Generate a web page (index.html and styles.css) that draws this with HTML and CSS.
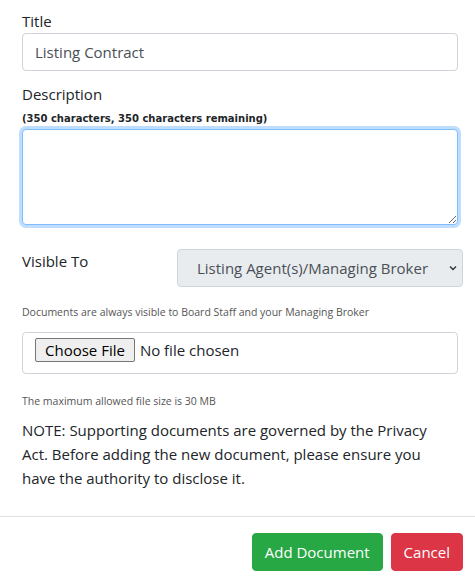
FILE: index.html
```html
<!DOCTYPE html>
<html lang="en">
<head>
    <meta charset="UTF-8">
    <meta name="viewport" content="width=device-width, initial-scale=1.0">
    <title>Add Document</title>
    <link rel="stylesheet" href="styles.css">
</head>
<body>
    <!-- Form body -->
    <div class="modal-body">
        <form class="doc-form">
            <div class="form-group">
                <label for="title" class="field-label">Title</label>
                <input type="text" id="title" class="form-control" value="Listing Contract">
            </div>

            <div class="form-group">
                <label for="desc" class="field-label desc-label">Description</label>
                <span class="char-count">(350 characters, 350 characters remaining)</span>
                <textarea id="desc" class="form-control text-area is-focused" rows="3"></textarea>
            </div>

            <div class="form-row">
                <label for="visible" class="row-label">Visible To</label>
                <div class="select-wrap">
                    <select id="visible" class="form-control select-box">
                        <option>Listing Agent(s)/Managing Broker</option>
                    </select>
                    <svg class="select-arrow" width="8" height="6" viewBox="0 0 8 6">
                        <polyline points="1,1.5 4,4.5 7,1.5" fill="none" stroke="#333" stroke-width="1.4"/>
                    </svg>
                </div>
            </div>

            <p class="hint hint-visible">Documents are always visible to Board Staff and your Managing Broker</p>

            <div class="file-box">
                <input type="file" class="file-input">
            </div>

            <p class="hint hint-size">The maximum allowed file size is 30 MB</p>

            <p class="note">NOTE: Supporting documents are governed by the Privacy Act. Before adding the new document, please ensure you have the authority to disclose it.</p>
        </form>
    </div>

    <!-- Footer buttons -->
    <div class="modal-footer">
        <button type="button" class="btn btn-success">Add Document</button>
        <button type="button" class="btn btn-danger">Cancel</button>
    </div>
</body>
</html>
```

FILE: styles.css
```css
body {
    margin: 0;
    font-family: 'Open Sans', sans-serif;
    font-size: 15px;
    line-height: 24px;
    color: #212529;
    background: #ffffff;
}
.modal-body {
    padding: 9px 17px 26px 22px;
}
.form-group {
    margin: 0;
}
.field-label {
    display: block;
    height: 24px;
}
.desc-label {
    margin-top: 11px;
}
.form-control {
    display: block;
    box-sizing: border-box;
    width: 100%;
    height: 38px;
    padding: 6px 12px;
    font-family: inherit;
    font-size: 15px;
    line-height: 24px;
    color: #495057;
    background-color: #ffffff;
    border: 1px solid #ced4da;
    border-radius: 4px;
    outline: none;
}
.char-count {
    display: block;
    margin: 6px 0 3px;
    font-family: 'DejaVu Sans', Verdana, sans-serif;
    font-size: 10px;
    font-weight: bold;
    line-height: 14px;
    color: #212529;
}
.text-area {
    height: 96px;
    resize: vertical;
}
.is-focused {
    border-color: #80bdff;
    box-shadow: 0 0 0 3px rgba(0, 123, 255, 0.25);
}
.form-row {
    display: flex;
    margin-top: 24px;
    margin-right: -5px;
}
.row-label {
    width: 155px;
    flex-shrink: 0;
}
.select-wrap {
    position: relative;
    flex: 1;
}
.select-box {
    appearance: none;
    -webkit-appearance: none;
    padding-left: 19px;
    background-color: #e9ecef;
    color: #495057;
}
.select-arrow {
    position: absolute;
    right: 6px;
    top: 16px;
    pointer-events: none;
}
.hint {
    margin: 16px 0 0;
    font-size: 10.5px;
    line-height: 18px;
    color: #555555;
}
.hint-size {
    margin-top: 18px;
}
.file-box {
    box-sizing: border-box;
    height: 42px;
    margin-top: 11px;
    padding: 5px 12px;
    border: 1px solid #ced4da;
    border-radius: 4px;
}
.file-input {
    font-family: inherit;
    font-size: 15px;
    color: #212529;
}
.file-input::file-selector-button {
    font-family: inherit;
    font-size: 15px;
    padding: 1px 9px;
    margin-right: 5px;
    color: #000000;
    background-color: #efefef;
    border: 1px solid #767676;
    border-radius: 2px;
}
.note {
    max-width: 416px;
    margin: 8px 0 0;
}
.modal-footer {
    display: flex;
    justify-content: flex-end;
    padding: 12px 8px;
    border-top: 1px solid #dee2e6;
}
.btn {
    margin: 4px;
    height: 38px;
    padding: 6px 12px;
    font-family: inherit;
    font-size: 15px;
    line-height: 24px;
    color: #ffffff;
    border: 1px solid transparent;
    border-radius: 4px;
    cursor: pointer;
}
.btn-success {
    background-color: #28a745;
    border-color: #28a745;
}
.btn-danger {
    background-color: #dc3545;
    border-color: #dc3545;
}
```
